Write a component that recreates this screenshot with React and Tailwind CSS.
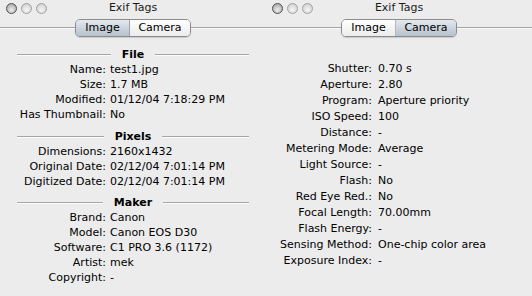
import React from 'react';

const font = { fontFamily: '"DejaVu Sans", "Liberation Sans", sans-serif' };

const imageRows = [
  {
    title: 'File',
    rows: [
      ['Name:', 'test1.jpg'],
      ['Size:', '1.7 MB'],
      ['Modified:', '01/12/04 7:18:29 PM'],
      ['Has Thumbnail:', 'No'],
    ],
  },
  {
    title: 'Pixels',
    rows: [
      ['Dimensions:', '2160x1432'],
      ['Original Date:', '02/12/04 7:01:14 PM'],
      ['Digitized Date:', '02/12/04 7:01:14 PM'],
    ],
  },
  {
    title: 'Maker',
    rows: [
      ['Brand:', 'Canon'],
      ['Model:', 'Canon EOS D30'],
      ['Software:', 'C1 PRO 3.6 (1172)'],
      ['Artist:', 'mek'],
      ['Copyright:', '-'],
    ],
  },
];

const cameraRows = [
  ['Shutter:', '0.70 s'],
  ['Aperture:', '2.80'],
  ['Program:', 'Aperture priority'],
  ['ISO Speed:', '100'],
  ['Distance:', '-'],
  ['Metering Mode:', 'Average'],
  ['Light Source:', '-'],
  ['Flash:', 'No'],
  ['Red Eye Red.:', 'No'],
  ['Focal Length:', '70.00mm'],
  ['Flash Energy:', '-'],
  ['Sensing Method:', 'One-chip color area'],
  ['Exposure Index:', '-'],
];

const TitleBar = () => (
  <div className="grid grid-cols-[1fr_auto_1fr] items-center h-[16px]">
    <div className="flex items-center gap-[4px] pl-[6px]">
      <span className="w-[11px] h-[11px] rounded-full border border-[#4f4f4f] bg-[radial-gradient(circle_at_50%_65%,#eeeeee,#9a9a9a)]" />
      <span className="w-[11px] h-[11px] rounded-full border border-[#a0a0a0] bg-[radial-gradient(circle_at_50%_65%,#f6f6f6,#c8c8c8)]" />
      <span className="w-[11px] h-[11px] rounded-full border border-[#a0a0a0] bg-[radial-gradient(circle_at_50%_65%,#f6f6f6,#c8c8c8)]" />
    </div>
    <div className="text-[11px] leading-[14px] text-[#1a1a1a]">Exif Tags</div>
    <div />
  </div>
);

const Segmented = ({ active }) => (
  <div className="flex items-center h-[18px] mt-[3px]">
    <div className="flex-1 border-t border-[#a4a4a4] border-b border-b-[#fafafa]" />
    <div className="flex w-[116px] h-[18px] rounded-[5px] border border-[#8c8c8c] overflow-hidden text-[11px] leading-[16px] shadow-[0_1px_1px_rgba(0,0,0,0.15)]">
      <div
        className={
          active === 'Image'
            ? 'w-[54px] text-center border-r border-[#9aa3ad] bg-gradient-to-b from-[#e4e9ef] to-[#b6c1cd]'
            : 'w-[54px] text-center border-r border-[#b8b8b8] bg-gradient-to-b from-[#ffffff] to-[#ececec]'
        }
      >
        Image
      </div>
      <div
        className={
          active === 'Camera'
            ? 'flex-1 text-center bg-gradient-to-b from-[#e4e9ef] to-[#b6c1cd]'
            : 'flex-1 text-center bg-gradient-to-b from-[#ffffff] to-[#ececec]'
        }
      >
        Camera
      </div>
    </div>
    <div className="flex-1 border-t border-[#a4a4a4] border-b border-b-[#fafafa]" />
  </div>
);

const SectionHeader = ({ title }) => (
  <div className="flex items-center gap-[11px] h-[15px] pl-[17px] pr-[17px]">
    <div className="flex-1 border-t border-[#a6a6a6] border-b border-b-[#fbfbfb]" />
    <div className="font-bold text-[11px] leading-[15px]">{title}</div>
    <div className="flex-1 border-t border-[#a6a6a6] border-b border-b-[#fbfbfb]" />
  </div>
);

const ImageWindow = () => (
  <div className="w-[266px] h-[296px] bg-[#ececec] flex flex-col text-black" style={font}>
    <TitleBar />
    <Segmented active="Image" />
    <div className="mt-[10px] flex flex-col">
      {imageRows.map((sec, i) => (
        <div key={sec.title} className={i === 0 ? '' : i === 1 ? 'mt-[7px]' : 'mt-[6px]'}>
          <SectionHeader title={sec.title} />
          <div className="grid grid-cols-[106px_1fr] gap-x-[4px] text-[11px] leading-[15px]">
            {sec.rows.map(([k, v]) => (
              <React.Fragment key={k}>
                <div className="text-right">{k}</div>
                <div>{v}</div>
              </React.Fragment>
            ))}
          </div>
        </div>
      ))}
    </div>
  </div>
);

const CameraWindow = () => (
  <div className="w-[266px] h-[296px] bg-[#ececec] flex flex-col text-black" style={font}>
    <TitleBar />
    <Segmented active="Camera" />
    <div className="mt-[24px] grid grid-cols-[106px_1fr] gap-x-[6px] text-[11px] leading-[16px]">
      {cameraRows.map(([k, v]) => (
        <React.Fragment key={k}>
          <div className="text-right">{k}</div>
          <div>{v}</div>
        </React.Fragment>
      ))}
    </div>
  </div>
);

export default function App() {
  return (
    <div className="flex w-[532px] h-[296px] overflow-hidden bg-[#ececec]">
      <ImageWindow />
      <CameraWindow />
    </div>
  );
}
